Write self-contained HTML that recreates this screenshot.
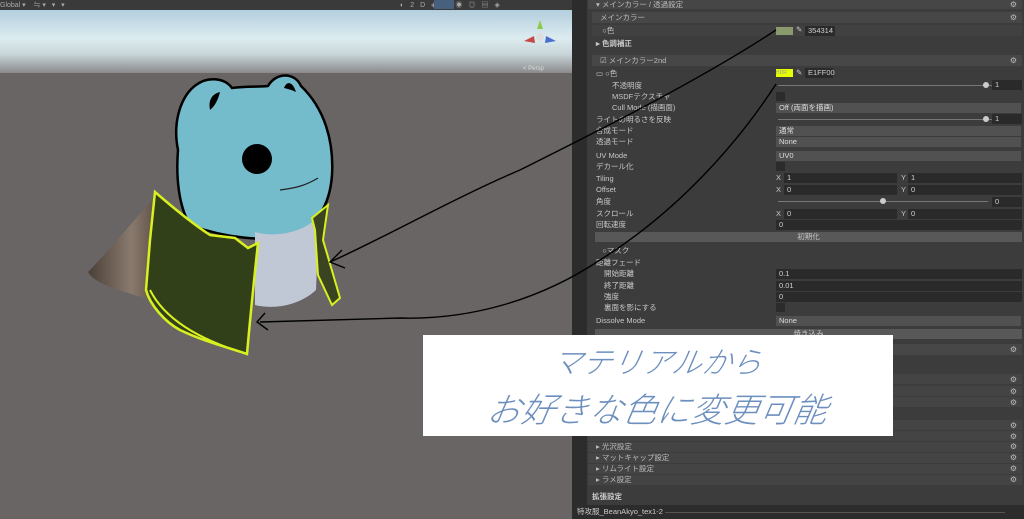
<!DOCTYPE html><html><head><meta charset="utf-8"><style>
*{margin:0;padding:0;box-sizing:border-box}
body{width:1024px;height:519px;overflow:hidden;background:#383838;font-family:"Liberation Sans","Noto Sans CJK JP",sans-serif;font-size:7.5px;color:#c8c8c8;position:relative}
.a{position:absolute}
.row{position:absolute;left:592px;width:430px;height:11px;line-height:11px;padding-left:4px;white-space:nowrap}
.f{position:absolute;background:#2a2a2a;height:10px;line-height:10px;padding-left:3px;color:#d0d0d0}
.dd{position:absolute;left:776px;width:245px;height:10px;line-height:10px;background:#515151;padding-left:3px;color:#ddd}
.sl{position:absolute;left:778px;height:1px;background:#777}
.knob{position:absolute;width:6px;height:6px;border-radius:50%;background:#ccc}
.cb{position:absolute;left:776px;width:9px;height:9px;background:#2b2b2b}
.hd{position:absolute;left:588px;width:434px;height:11px;line-height:11px;background:#474747;padding-left:8px;color:#bbb}
.g{position:absolute;right:5px;top:0;color:#bbb;font-size:8px}
</style></head><body>
<!-- viewport -->
<div class="a" style="left:0;top:0;width:572px;height:10px;background:#3a3a3a"></div>
<div class="a" style="left:0;top:10px;width:572px;height:63px;background:linear-gradient(#b3cedd,#dcecf0 45%,#c9d6d9 70%,#8a8a8c)"></div>
<div class="a" style="left:0;top:73px;width:572px;height:446px;background:#686564"></div>
<div class="a" style="left:0;top:0;color:#aaa;font-size:7px">Global ▾ &nbsp;&nbsp; ⇋ ▾ &nbsp; ▾ &nbsp; ▾</div>
<div class="a" style="left:400px;top:0;color:#aaa;font-size:7px;width:170px;letter-spacing:6px">◐2D◈◆◉◎▤◈</div>
<div class="a" style="left:434px;top:0;width:20px;height:9px;background:#46607e"></div>
<div class="a" style="left:523px;top:66px;color:#ddd;font-size:6px">&lt; Persp</div>
<svg class="a" style="left:520px;top:15px" width="40" height="40"><polygon points="20,5 17,14 23,14" fill="#8dcc4a"/><polygon points="4,26 14,21 15,28" fill="#c64a42"/><polygon points="36,26 26,21 25,28" fill="#4a6fd0"/><circle cx="20" cy="22" r="4" fill="#ddd"/></svg>
<svg class="a" style="left:0;top:0" width="572" height="519">
<defs><linearGradient id="sl" x1="0" x2="1"><stop offset="0" stop-color="#4a4038"/><stop offset="0.6" stop-color="#8a7a6e"/><stop offset="1" stop-color="#5a4c44"/></linearGradient></defs>
<!-- head -->
<path d="M178,150 C172,120 182,95 196,85 C208,76 225,78 232,88 C245,86 258,87 268,86 C276,72 295,72 301,86 C324,108 334,140 332,175 C330,205 316,228 292,236 C265,242 225,238 190,225 C178,205 176,175 178,150 Z" fill="#74bccc" stroke="#000" stroke-width="2.5"/>
<!-- shirt -->
<path d="M255,232 C275,238 300,232 312,222 L318,240 L316,290 C300,305 275,310 255,305 Z" fill="#c0c8d6"/>
<!-- right flap -->
<path d="M312,218 L328,205 L323,240 L340,298 L332,305 L318,275 L315,230 Z" fill="#3a4420" stroke="#d8f020" stroke-width="2"/>
<!-- left sleeve -->
<path d="M152,200 C130,225 105,255 88,272 C95,285 125,292 152,300 L160,250 Z" fill="url(#sl)"/>
<!-- jacket front -->
<path d="M155,192 C170,205 190,222 210,235 L235,238 L248,248 L258,243 C254,280 250,320 247,354 C230,348 205,342 180,330 C165,322 150,305 146,290 L150,240 Z" fill="#32401a" stroke="#d8f020" stroke-width="2.5"/>
<path d="M150,290 C165,320 200,340 247,354" fill="none" stroke="#d8f020" stroke-width="2"/>
<circle cx="257" cy="159" r="15" fill="#000"/>
<path d="M210,110 C208,100 212,94 220,92 C218,100 215,106 210,110 Z M284,88 C287,80 293,82 296,92 C292,90 288,89 284,88 Z" fill="#000"/>
<path d="M280,190 C295,188 305,186 318,178" stroke="#222" fill="none" stroke-width="1.2"/>
</svg>
<!-- inspector -->
<div class="a" style="left:572px;top:0;width:15px;height:505px;background:#2c2c2c"></div>
<div class="a" style="left:587px;top:0;width:437px;height:505px;background:#3c3c3c"></div>
<div class="hd" style="top:0;height:9px;line-height:9px;background:#464646">▾ メインカラー / 透過設定<span class="g">⚙</span></div>
<div class="hd" style="left:592px;width:430px;top:12px">メインカラー<span class="g">⚙</span></div>
<div class="row" style="top:25px;background:#414141">&nbsp;&nbsp;&nbsp;○色</div>
<div class="a" style="left:776px;top:27px;width:17px;height:8px;background:#8b9a6c"></div>
<div class="a" style="left:796px;top:25px;color:#ccc">✎</div>
<div class="f" style="left:805px;top:26px;width:30px">354314</div>
<div class="row" style="top:38px;font-weight:bold">▸ 色調補正</div>
<div class="hd" style="left:592px;width:430px;top:55px">☑ メインカラー2nd<span class="g">⚙</span></div>
<div class="row" style="top:68px">▭ ○色</div>
<div class="a" style="left:776px;top:69px;width:17px;height:8px;background:#e6ff00;color:#999;font-size:5px;line-height:8px">HDR</div>
<div class="a" style="left:796px;top:68px;color:#ccc">✎</div>
<div class="f" style="left:805px;top:68px;width:28px">E1FF00</div>
<div class="row" style="top:80px;padding-left:20px">不透明度</div><div class="sl" style="top:85px;width:235px"></div><div class="knob" style="left:983px;top:82px"></div><div class="f" style="left:992px;top:80px;width:30px">1</div>
<div class="row" style="top:91px;padding-left:20px">MSDFテクスチャ</div><div class="cb" style="top:92px"></div>
<div class="row" style="top:102px;padding-left:20px">Cull Mode (描画面)</div><div class="dd" style="top:103px">Off (両面を描画)</div>
<div class="row" style="top:114px">ライトの明るさを反映</div><div class="sl" style="top:119px;width:235px"></div><div class="knob" style="left:983px;top:116px"></div><div class="f" style="left:992px;top:114px;width:30px">1</div>
<div class="row" style="top:125px">合成モード</div><div class="dd" style="top:126px">通常</div>
<div class="row" style="top:136px">透過モード</div><div class="dd" style="top:137px">None</div>
<div class="row" style="top:150px">UV Mode</div><div class="dd" style="top:151px">UV0</div>
<div class="row" style="top:161px">デカール化</div><div class="cb" style="top:162px"></div>
<div class="row" style="top:173px">Tiling</div><div class="a" style="left:776px;top:173px">X</div><div class="f" style="left:784px;top:173px;width:113px">1</div><div class="a" style="left:901px;top:173px">Y</div><div class="f" style="left:908px;top:173px;width:114px">1</div>
<div class="row" style="top:184px">Offset</div><div class="a" style="left:776px;top:185px">X</div><div class="f" style="left:784px;top:185px;width:113px">0</div><div class="a" style="left:901px;top:185px">Y</div><div class="f" style="left:908px;top:185px;width:114px">0</div>
<div class="row" style="top:196px">角度</div><div class="sl" style="top:201px;width:210px"></div><div class="knob" style="left:880px;top:198px"></div><div class="f" style="left:992px;top:197px;width:30px">0</div>
<div class="row" style="top:208px">スクロール</div><div class="a" style="left:776px;top:209px">X</div><div class="f" style="left:784px;top:209px;width:113px">0</div><div class="a" style="left:901px;top:209px">Y</div><div class="f" style="left:908px;top:209px;width:114px">0</div>
<div class="row" style="top:219px">回転速度</div><div class="f" style="left:776px;top:220px;width:246px">0</div>
<div class="a" style="left:595px;top:232px;width:427px;height:10px;background:#585858;text-align:center;line-height:10px">初期化</div>
<div class="row" style="top:245px">&nbsp;&nbsp;&nbsp;○マスク</div>
<div class="row" style="top:257px">距離フェード</div>
<div class="row" style="top:268px;padding-left:12px">開始距離</div><div class="f" style="left:776px;top:269px;width:246px">0.1</div>
<div class="row" style="top:280px;padding-left:12px">終了距離</div><div class="f" style="left:776px;top:281px;width:246px">0.01</div>
<div class="row" style="top:291px;padding-left:12px">強度</div><div class="f" style="left:776px;top:292px;width:246px">0</div>
<div class="row" style="top:302px;padding-left:12px">裏面を影にする</div><div class="cb" style="top:303px"></div>
<div class="row" style="top:315px">Dissolve Mode</div><div class="dd" style="top:316px">None</div>
<div class="a" style="left:595px;top:329px;width:427px;height:10px;background:#585858;text-align:center;line-height:10px">焼き込み</div>
<div class="hd" style="top:344px">&nbsp;<span class="g">⚙</span></div>
<div class="hd" style="top:374px;height:10px;background:#444">&nbsp;<span class="g">⚙</span></div>
<div class="hd" style="top:386px;height:10px;background:#444">&nbsp;<span class="g">⚙</span></div>
<div class="hd" style="top:397px;height:10px;background:#444">&nbsp;<span class="g">⚙</span></div>
<div class="hd" style="top:420px;height:10px;background:#444">&nbsp;<span class="g">⚙</span></div>
<div class="hd" style="top:431px;height:10px;background:#444">&nbsp;<span class="g">⚙</span></div>
<div class="hd" style="top:442px;height:10px;background:#444;line-height:10px">▸ 光沢設定<span class="g">⚙</span></div>
<div class="hd" style="top:453px;height:10px;background:#444;line-height:10px">▸ マットキャップ設定<span class="g">⚙</span></div>
<div class="hd" style="top:464px;height:10px;background:#444;line-height:10px">▸ リムライト設定<span class="g">⚙</span></div>
<div class="hd" style="top:475px;height:10px;background:#444;line-height:10px">▸ ラメ設定<span class="g">⚙</span></div>
<div class="a" style="left:592px;top:491px;font-weight:bold;color:#ccc">拡張設定</div>
<div class="a" style="left:572px;top:505px;width:452px;height:14px;background:#2c2c2c;padding-left:5px;line-height:13px;color:#ccc">特攻服_BeanAkyo_tex1-2 <span style="display:inline-block;width:340px;border-top:1px solid #555;vertical-align:middle"></span></div>
<!-- arrows -->
<svg class="a" style="left:0;top:0" width="1024" height="519"><g fill="none" stroke="#000" stroke-width="1.4">
<path d="M776,30 C700,80 600,130 520,170 C450,200 380,240 330,262"/><path d="M342,250 L330,262 L345,268"/>
<path d="M776,84 C740,140 680,210 600,260 C540,300 470,320 400,318 L260,322"/><path d="M265,313 L257,322 L268,330"/>
</g></svg>
<!-- caption -->
<div class="a" style="left:423px;top:335px;width:470px;height:101px;background:#fff"></div>
<div class="a" style="left:423px;top:338px;width:470px;text-align:center;font-size:30px;font-style:italic;color:#6d8fbe;font-family:'Noto Sans CJK JP',sans-serif;font-weight:300;transform:skewX(-10deg)">マテリアルから</div>
<div class="a" style="left:423px;top:383px;width:470px;text-align:center;font-size:34px;font-style:italic;color:#6d8fbe;font-family:'Noto Sans CJK JP',sans-serif;font-weight:300;transform:skewX(-10deg)">お好きな色に変更可能</div>
</body></html>
